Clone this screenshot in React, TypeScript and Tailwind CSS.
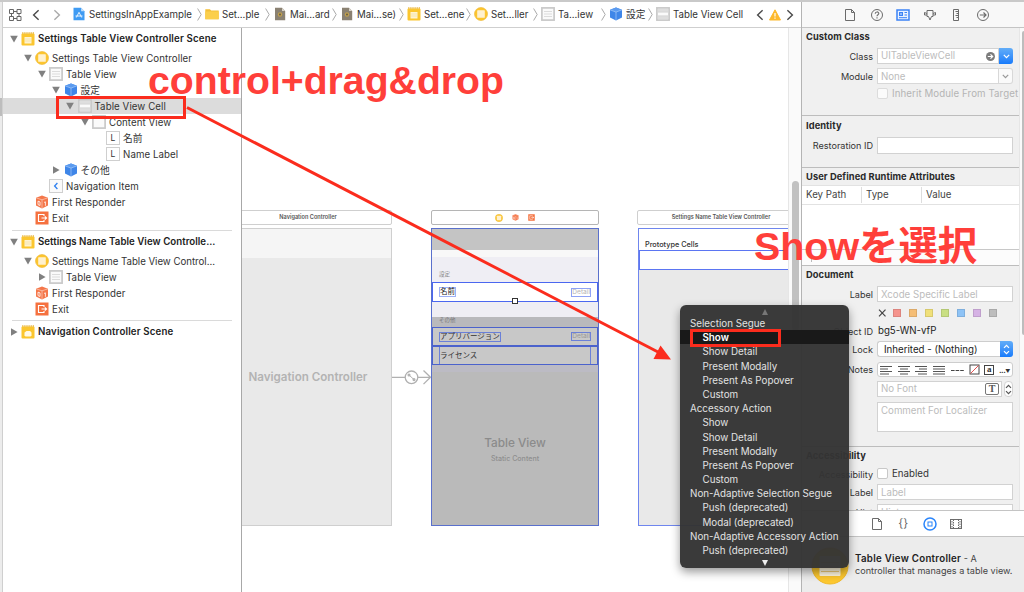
import React from 'react';

type IconName = 'scene' | 'navScene' | 'controller' | 'table' | 'cell' | 'view' | 'cube' | 'label' | 'navItem' | 'responder' | 'exit' | 'app' | 'folder' | 'file';

interface OutlineNode {
  level: number;
  icon: IconName;
  text: string;
  arrow?: 'open' | 'closed';
  selected?: boolean;
}

const INDENT = ['pl-[4px]', 'pl-[18px]', 'pl-[32px]', 'pl-[46.5px]', 'pl-[60.5px]', 'pl-[75px]', 'pl-[89px]'];

const settingsScene: OutlineNode[] = [
  { level: 1, icon: 'controller', text: 'Settings Table View Controller', arrow: 'open' },
  { level: 2, icon: 'table', text: 'Table View', arrow: 'open' },
  { level: 3, icon: 'cube', text: '設定', arrow: 'open' },
  { level: 4, icon: 'cell', text: 'Table View Cell', arrow: 'open', selected: true },
  { level: 5, icon: 'view', text: 'Content View', arrow: 'open' },
  { level: 6, icon: 'label', text: '名前' },
  { level: 6, icon: 'label', text: 'Name Label' },
  { level: 3, icon: 'cube', text: 'その他', arrow: 'closed' },
  { level: 2, icon: 'navItem', text: 'Navigation Item' },
  { level: 1, icon: 'responder', text: 'First Responder' },
  { level: 1, icon: 'exit', text: 'Exit' },
];

const nameScene: OutlineNode[] = [
  { level: 1, icon: 'controller', text: 'Settings Name Table View Control...', arrow: 'open' },
  { level: 2, icon: 'table', text: 'Table View', arrow: 'closed' },
  { level: 1, icon: 'responder', text: 'First Responder' },
  { level: 1, icon: 'exit', text: 'Exit' },
];

const crumbs: { icon: IconName; text: string; width: string }[] = [
  { icon: 'app', text: 'SettingsInAppExample', width: 'w-[133px]' },
  { icon: 'folder', text: 'Set...ple', width: 'w-[68px]' },
  { icon: 'file', text: 'Mai...ard', width: 'w-[67px]' },
  { icon: 'file', text: 'Mai...se)', width: 'w-[67px]' },
  { icon: 'scene', text: 'Set...ene', width: 'w-[67px]' },
  { icon: 'controller', text: 'Set...ller', width: 'w-[67px]' },
  { icon: 'table', text: 'Ta...iew', width: 'w-[68px]' },
  { icon: 'cube', text: '設定', width: 'w-[47px]' },
  { icon: 'cell', text: 'Table View Cell', width: 'w-[96px]' },
];

const segues: { text: string; header?: boolean; active?: boolean }[] = [
  { text: 'Selection Segue', header: true },
  { text: 'Show', active: true },
  { text: 'Show Detail' },
  { text: 'Present Modally' },
  { text: 'Present As Popover' },
  { text: 'Custom' },
  { text: 'Accessory Action', header: true },
  { text: 'Show' },
  { text: 'Show Detail' },
  { text: 'Present Modally' },
  { text: 'Present As Popover' },
  { text: 'Custom' },
  { text: 'Non-Adaptive Selection Segue', header: true },
  { text: 'Push (deprecated)' },
  { text: 'Modal (deprecated)' },
  { text: 'Non-Adaptive Accessory Action', header: true },
  { text: 'Push (deprecated)' },
];

const swatches = ['bg-[#f5948d]', 'bg-[#f5be76]', 'bg-[#f0e07a]', 'bg-[#c9df83]', 'bg-[#8ec3f6]', 'bg-[#d5b2e4]', 'bg-[#bdbdbd]'];

const Icon = ({ name, size = 14 }: { name: IconName; size?: number }) => (
  <svg width={size} height={size} viewBox="0 0 14 14" fill="none" className="shrink-0">
    {(name === 'scene' || name === 'navScene') && (
      <>
        <rect x="0.5" y="1.5" width="13" height="12" rx="1" fill="#fbc62f" />
        <path d="M1.2 1h12" stroke="#e6b030" strokeWidth="1.4" strokeDasharray="1.2 0.9" />
        {name === 'scene' ? (
          <>
            <rect x="3.5" y="5" width="7" height="6.5" fill="#fff3d0" />
            <path d="M4 7h6M4 9h6" stroke="#f1dfa5" strokeWidth="0.7" />
          </>
        ) : (
          <path d="M3.5 7.6L5.5 6h3.6l1.4 1.6v3l-1 0.9h-5l-1-0.9z" fill="#fff9e6" />
        )}
      </>
    )}
    {name === 'controller' && (
      <>
        <circle cx="7" cy="7" r="6.5" fill="#fcc52f" stroke="#edb52d" strokeWidth="0.6" />
        <rect x="3.2" y="3.2" width="7.6" height="7.6" rx="0.6" fill="#fff1cf" />
      </>
    )}
    {(name === 'table' || name === 'cell' || name === 'view') && (
      <>
        <rect x="0.9" y="0.9" width="12.2" height="12.2" fill="#fafafa" stroke="#c9c9c9" strokeWidth="1.7" />
        {name === 'table' && <path d="M3 4.5h8M3 7h8M3 9.5h8" stroke="#d4d4d4" strokeWidth="0.8" />}
        {name === 'cell' && (
          <>
            <path d="M2 3.3h10M2 10.9h10" stroke="#dedede" strokeWidth="2.6" />
            <path d="M2 5h10M2 9h10" stroke="#bcbcbc" strokeWidth="0.7" />
          </>
        )}
      </>
    )}
    {name === 'cube' && (
      <>
        <path d="M7 0.4l6 2.4v7.8l-6 3-6-3V2.8z" fill="#3f86e8" />
        <path d="M7 0.4l6 2.4-6 2.3-6-2.3z" fill="#5b9bf0" />
        <path d="M1 2.8l6 2.3 6-2.3M7 5.1v8.5" stroke="#b9d5fa" strokeWidth="0.6" />
      </>
    )}
    {name === 'navItem' && (
      <>
        <rect x="0.5" y="0.5" width="13" height="13" fill="#fafafa" stroke="#cfcfcf" />
        <path d="M8.4 4L5.6 7l2.8 3" stroke="#2f80f0" strokeWidth="1.3" />
      </>
    )}
    {name === 'responder' && (
      <>
        <path d="M7 0.5l6 2.2v7.8l-6 3-6-3V2.7z" fill="#f5774a" />
        <path d="M1 2.8l6 2 6-2M7 4.8v8.5" stroke="#fbd0bf" strokeWidth="0.7" />
        <path d="M3 6.2l2 .7v3.6l-2-.9zM9 7.5l1.4-.7v4" stroke="#fff" strokeWidth="0.8" />
      </>
    )}
    {name === 'exit' && (
      <>
        <rect x="0.5" y="0.5" width="13" height="13" fill="#f5713f" />
        <path d="M9 5V3.5H3.5v7H9V9M6.5 7h5M9.8 5.3L11.6 7 9.8 8.7" stroke="#fff" strokeWidth="1.1" />
      </>
    )}
    {name === 'app' && (
      <>
        <path d="M1.5 0.8h7.6l3.4 3.4v9H1.5z" fill="#3f9bf3" />
        <path d="M9.1 0.8v3.4h3.4z" fill="#c5e1fb" />
        <path d="M4.3 10.5L7 5.3l2.7 5.2M3.5 9h7" stroke="#e6f3ff" strokeWidth="1" />
      </>
    )}
    {name === 'folder' && (
      <>
        <path d="M0.3 2.2h4.6l1.2 1.4h7.6v8.6H0.3z" fill="#f3bf37" />
        <path d="M0.3 4.4h13.4v7.8H0.3z" fill="#fbcf4c" />
      </>
    )}
    {name === 'file' && (
      <>
        <path d="M2 0.8h7l3.2 3.2v9.2H2z" fill="#8a8172" />
        <path d="M9 0.8V4h3.2z" fill="#d7d2c8" />
        <circle cx="7" cy="7.5" r="2.2" fill="#c2a04c" />
        <circle cx="7" cy="7.5" r="0.9" fill="#5b5547" />
      </>
    )}
  </svg>
);

const Chevron = ({ left, color = '#4a4a4a' }: { left?: boolean; color?: string }) => (
  <svg width="8" height="12" viewBox="0 0 8 12" fill="none" className="shrink-0">
    <path d={left ? 'M6.6 1.2L1.6 6l5 4.8' : 'M1.4 1.2l5 4.8-5 4.8'} stroke={color} strokeWidth="1.4" />
  </svg>
);

const Disclosure = ({ state }: { state?: 'open' | 'closed' }) => (
  <span className="flex w-[13px] shrink-0 justify-center">
    {state && (
      <svg width="8" height="8" viewBox="0 0 8 8">
        <path d={state === 'open' ? 'M0.2 0.8h7.6L4 7.6z' : 'M1 0.2v7.6L7.6 4z'} fill="#808080" />
      </svg>
    )}
  </span>
);

const NodeIcon = ({ name }: { name: IconName }) => (
  <span className="mr-[2px] flex w-4 shrink-0 justify-center">
    {name === 'label' ? (
      <span className="flex size-[14px] items-center justify-center border border-[#cfcfcf] bg-white text-[8.5px]">L</span>
    ) : (
      <Icon name={name} />
    )}
  </span>
);

const OutlineRow = ({ node }: { node: OutlineNode }) => (
  <div className={`flex h-4 items-center whitespace-nowrap ${INDENT[node.level]} ${node.selected ? 'bg-[#dcdcdc]' : ''}`}>
    <Disclosure state={node.arrow} />
    <NodeIcon name={node.icon} />
    <span className={node.text.endsWith('...') ? 'pt-[2px] tracking-[-0.03px]' : 'pt-[2px] tracking-[0.08px]'}>{node.text}</span>
  </div>
);

const SceneHeader = ({ text, icon = 'scene', arrow = 'open' }: { text: string; icon?: IconName; arrow?: 'open' | 'closed' }) => (
  <div className="flex h-[22px] items-center whitespace-nowrap pl-[4px] font-semibold text-[#222]">
    <Disclosure state={arrow} />
    <NodeIcon name={icon} />
    <span className={text.endsWith('...') ? 'pt-px tracking-[0.03px]' : 'pt-px tracking-[0.16px]'}>{text}</span>
  </div>
);

const Outline = () => (
  <div className="w-[239px] shrink-0 overflow-hidden border-r border-[#a8a8a8] bg-white">
    <SceneHeader text="Settings Table View Controller Scene" />
    {settingsScene.map((n, i) => <OutlineRow key={i} node={n} />)}
    <div className="mx-[9px] mt-1 h-px bg-[#dadada]" />
    <SceneHeader text="Settings Name Table View Controlle..." />
    {nameScene.map((n, i) => <OutlineRow key={i} node={n} />)}
    <div className="mx-[9px] mt-[3px] h-px bg-[#dadada]" />
    <SceneHeader text="Navigation Controller Scene" icon="navScene" arrow="closed" />
  </div>
);

const JumpBar = () => (
  <div className="flex h-[26px] shrink-0 items-center border-b border-[#cfcfcf] bg-white pl-[6px] whitespace-nowrap">
    <svg width="13" height="12" viewBox="0 0 13 12" fill="none" stroke="#666" strokeWidth="1">
      <path d="M0.5 0.5h4v4h-4zM8 0.5h4v4H8zM0.5 7.5h4v4h-4zM8 7.5h4v4H8zM4.5 2.5H8M2.5 4.5v3M10 4.5v3M4.5 9.5H8" />
    </svg>
    <div className="flex w-[50px] justify-between pr-[11px] pl-[10px]">
      <Chevron left />
      <Chevron color="#aaa" />
    </div>
    <div className="flex items-center">
      {crumbs.map((c, i) => (
        <div key={i} className={`flex shrink-0 items-center ${c.width}`}>
          <Icon name={c.icon} />
          <span className="ml-[3px] pt-px">{c.text}</span>
          {i < crumbs.length - 1 && (
            <svg width="5" height="13" viewBox="0 0 5 13" fill="none" className="mr-[3.5px] ml-auto">
              <path d="M0.6 0.5L4.2 6.5l-3.6 6" stroke="#aaa" strokeWidth="1" />
            </svg>
          )}
        </div>
      ))}
    </div>
    <div className="flex items-center gap-[5px] pl-[4px]">
      <Chevron left />
      <svg width="12" height="12" viewBox="0 0 12 12">
        <path d="M6 0.8L11.5 11h-11z" fill="#fdb92d" stroke="#fdb92d" strokeWidth="1" strokeLinejoin="round" />
        <path d="M6 4v3.6M6 8.6v1.2" stroke="#fff" strokeWidth="1.2" />
      </svg>
      <Chevron />
    </div>
  </div>
);

// Storyboard canvas: scenes sit at free positions
const Canvas = () => (
  <div className="relative h-full flex-1 overflow-hidden bg-white">
    {/* Navigation Controller */}
    <div className="absolute top-[182px] left-[-18px] flex h-[15px] w-[168px] items-center justify-center rounded-[2px] border border-[#cfcfcf] text-[5.6px] font-semibold text-[#555]">
      Navigation Controller
    </div>
    <div className="absolute top-[200px] left-[-18px] flex h-[298px] w-[168px] flex-col border border-[#cfcfcf] bg-[#e9e9e9]">
      <div className="h-[29px] bg-[#f5f5f5]" />
      <div className="mt-[111px] text-center text-[11.6px] font-semibold text-[#b3b3b3]">Navigation Controller</div>
    </div>
    <svg className="absolute top-[341px] left-[150px]" width="40" height="16" viewBox="0 0 40 16" fill="none" stroke="#b0b0b0" strokeWidth="1.3">
      <path d="M0 8.3h13M26 8.3h12M31.500 1.500L38.500 8.300l-7 6.800" />
      <circle cx="19.5" cy="8.3" r="6.3" />
      <path d="M17 6l5 4.6" strokeWidth="1" />
      <circle cx="17" cy="6" r="0.9" />
      <circle cx="22" cy="10.6" r="0.9" />
    </svg>

    {/* Settings table */}
    <div className="absolute top-[182px] left-[189px] flex h-[15px] w-[168px] items-center justify-center gap-[9px] rounded-[2px] border border-[#b5b5b5] bg-white">
      <Icon name="controller" size={8} />
      <Icon name="responder" size={7} />
      <Icon name="exit" size={7} />
    </div>
    <div className="absolute top-[200px] left-[189px] flex h-[298px] w-[168px] flex-col border border-[#5a70cc] bg-[#bababa] text-[7.5px]">
      <div className="h-[21px] bg-[#c4c4c4]" />
      <div className="h-[7px] bg-[#f8f8f8]" />
      <div className="h-[25px] bg-[#efeef4] pt-[13px] pl-[7px] text-[5.5px] text-[#888]">設定</div>
      <div className="flex h-[20px] items-center justify-between border border-[#4b67f0] bg-white px-[6px]">
        <span className="border border-[#9eb0f5] leading-[8px] text-[#222]">名前</span>
        <span className="border border-[#8ea2f5] text-[6.6px] leading-[7px] text-[#b5b5b5]">Detail</span>
      </div>
      <div className="h-[15px] bg-[#efeef4]" />
      <div className="h-[10px] bg-[#b9b9bc] pl-[7px] text-[5.5px] leading-[7px] text-[#777]">その他</div>
      <div className="flex h-[19px] items-center justify-between border border-[#4b62cc] bg-[#c8c8c8] px-[6px]">
        <span className="border border-[#6a80d8] leading-[8px] text-[#333]">アプリバージョン</span>
        <span className="border border-[#6a80d8] text-[6.6px] leading-[7px] text-[#999]">Detail</span>
      </div>
      <div className="flex h-[19px] border border-[#4b62cc] bg-[#c8c8c8] px-[6px]">
        <span className="w-full border-x border-[#6a80d8] leading-[17px] text-[#333]">ライセンス</span>
      </div>
      <div className="h-[7px] bg-[#bcbbc4]" />
      <div className="mt-[62px] text-center text-[11.8px] leading-[18px] font-medium text-[#8b8b8b]">Table View</div>
      <div className="text-center text-[7.1px] leading-[13px] font-medium text-[#8f8f8f]">Static Content</div>
    </div>
    <div className="absolute top-[270px] left-[270px] size-[6px] border border-[#333] bg-white" />

    {/* Settings name table */}
    <div className="absolute top-[182px] left-[395px] flex h-[15px] w-[168px] items-center justify-center rounded-[2px] border border-[#cfcfcf] text-[5.6px] font-semibold text-[#555]">
      Settings Name Table View Controller
    </div>
    <div className="absolute top-[200px] left-[396px] flex h-[298px] w-[168px] flex-col border border-[#6f86ee] bg-[#e9e9e9]">
      <div className="h-[21px] bg-white pt-[9px] pl-[6px] text-[7.3px] leading-[13px] font-medium text-[#333]">Prototype Cells</div>
      <div className="h-[20px] border border-[#5b75f2] bg-white" />
    </div>
  </div>
);

const FieldRow = ({ label, className = 'h-[19px]', children }: { label?: string; className?: string; children: React.ReactNode }) => (
  <div className={`flex items-center ${className}`}>
    <span className="w-[71px] shrink-0 pt-px text-right text-[9.1px] whitespace-nowrap text-[#333]">{label}</span>
    <div className="ml-1 flex w-[136px] shrink-0 items-center">{children}</div>
  </div>
);

const TextField = ({ placeholder, className = 'h-4' }: { placeholder?: string; className?: string }) => (
  <div className={`flex w-full border border-[#d2d2d2] bg-white px-[3px] leading-[15px] whitespace-nowrap text-[#bcbcbc] ${className}`}>{placeholder}</div>
);

const SectionTitle = ({ children }: { children: React.ReactNode }) => (
  <div className="pl-1 text-[9.3px] leading-[17px] font-bold tracking-[0.08px] whitespace-nowrap text-[#2a2a2a]">{children}</div>
);

const SmallChevron = ({ color }: { color: string }) => (
  <svg width="7" height="5" viewBox="0 0 7 5" fill="none">
    <path d="M0.8 0.8L3.5 3.7 6.2 0.8" stroke={color} strokeWidth="1.2" />
  </svg>
);

const UpDown = ({ color }: { color: string }) => (
  <svg width="7" height="11" viewBox="0 0 7 11" fill="none" stroke={color} strokeWidth="1.2">
    <path d="M1 3.8L3.5 1.3 6 3.8M1 7.2l2.5 2.5L6 7.2" />
  </svg>
);

const InspectorTabs = () => (
  <div className="flex h-[26px] shrink-0 items-center justify-center gap-[12.6px] border-b border-[#c4c4c4] bg-[#f8f8f8] pl-[7px]">
    <svg width="14" height="14" viewBox="0 0 14 14" fill="none" stroke="#6b6b6b">
      <path d="M2.5 1.5h6l3 3v8h-9zM8.5 1.5v3h3" />
    </svg>
    <svg width="14" height="14" viewBox="0 0 14 14" fill="none" stroke="#6b6b6b">
      <circle cx="7" cy="7" r="5.5" />
      <path d="M5.2 5.8C5.2 3.3 8.8 3.4 8.8 5.5 8.8 6.8 7 6.7 7 8.3M7 9.2v1.2" strokeWidth="1.1" />
    </svg>
    <svg width="14" height="14" viewBox="0 0 14 14" fill="none" stroke="#3b82f6">
      <rect x="1" y="2" width="12" height="10" fill="#eaf2ff" strokeWidth="1.5" />
      <rect x="3.5" y="4.5" width="3" height="3" fill="#8fb9fa" />
      <path d="M8.5 4.500h2.500M8.500 7h2.500M3 9.700h8" />
    </svg>
    <svg width="14" height="14" viewBox="0 0 14 14" fill="none" stroke="#6b6b6b">
      <path d="M4 2.5h6v6H8.5L7 12 5.5 8.500H4zM1.500 4.500L4 5.500M1.500 4.500v2.500H4M12.500 4.500L10 5.500M12.500 4.500v2.500H10" />
    </svg>
    <svg width="14" height="14" viewBox="0 0 14 14" fill="none" stroke="#6b6b6b">
      <path d="M4.5 1.500h5v11h-5zM6.500 3.500h3M7.500 5.500h2M6.500 7.500h3M7.500 9.500h2" />
    </svg>
    <svg width="14" height="14" viewBox="0 0 14 14" fill="none" stroke="#6b6b6b">
      <circle cx="7" cy="7" r="5.5" />
      <path d="M3.8 7h6M7.500 4.500L10 7 7.500 9.500" strokeWidth="1.2" />
    </svg>
  </div>
);

const NotesBar = () => (
  <div className="flex h-[15px] w-full items-center justify-between rounded-[3px] border border-[#cdcdcd] bg-white px-[2px]">
    {['M0 1.5h12M0 4h8M0 6.5h12M0 9h9', 'M0 1.5h12M2 4h8M0 6.5h12M2 9h8', 'M0 1.5h12M4 4h8M0 6.5h12M3 9h9', 'M0 1.5h12M0 4h12M0 6.5h12M0 9h12'].map(d => (
      <svg key={d} width="13" height="10" viewBox="0 0 13 10" stroke="#555" strokeWidth="1"><path d={d} /></svg>
    ))}
    <svg width="13" height="10" viewBox="0 0 13 10"><path d="M0 5.5h13" stroke="#444" strokeDasharray="3.6 1" /></svg>
    <svg width="11" height="11" viewBox="0 0 11 11" fill="none">
      <rect x="1" y="1" width="9" height="9" stroke="#444" />
      <path d="M1.5 9.5l8-8" stroke="#e25050" />
    </svg>
    <span className="flex size-[10px] items-center justify-center border border-[#444] font-['Liberation_Serif'] text-[9px] leading-none font-bold text-[#333]">a</span>
    <span className="text-[9px] tracking-tighter whitespace-nowrap">...<span className="text-[5px]">▼</span></span>
  </div>
);

const Inspector = () => (
  <div className="flex w-[223px] shrink-0 flex-col border-l border-[#b4b4b4] bg-[#f0f0f0]">
    <InspectorTabs />
    <div className="flex h-[482px] shrink-0 overflow-hidden">
      <div className="w-[217px] shrink-0">
        <section className="h-[87px]">
          <SectionTitle>Custom Class</SectionTitle>
          <FieldRow label="Class" className="mt-[2px] h-[18px]">
            <div className="flex h-4 flex-1 items-center justify-between border border-[#d2d2d2] bg-white px-[3px] text-[#bcbcbc]">
              <span className="pt-px">UITableViewCell</span>
              <svg width="9" height="9" viewBox="0 0 9 9" fill="none">
                <circle cx="4.5" cy="4.5" r="4.5" fill="#7c7c7c" />
                <path d="M1.8 4.5h4.5M4.5 2.3l2.2 2.2-2.2 2.2" stroke="#fff" strokeWidth="1.2" />
              </svg>
            </div>
            <span className="flex h-4 w-[14px] items-center justify-center rounded-r-[3px] bg-gradient-to-b from-[#62adf8] to-[#167bfb]"><SmallChevron color="#fff" /></span>
          </FieldRow>
          <FieldRow label="Module" className="mt-[2px] h-[18px]">
            <div className="h-4 flex-1 border border-[#d8d8d8] bg-white px-[3px] leading-[15px] text-[#bcbcbc]">None</div>
            <span className="flex h-4 w-[14px] items-center justify-center rounded-r-[3px] border border-l-0 border-[#d8d8d8] bg-[#fafafa]"><SmallChevron color="#999" /></span>
          </FieldRow>
          <FieldRow className="h-[18px]">
            <span className="size-[11px] shrink-0 rounded-[2px] border border-[#dcdcdc] bg-[#fbfbfb]" />
            <span className="ml-[4px] pt-px tracking-[0.09px] whitespace-nowrap text-[#b4b4b4]">Inherit Module From Target</span>
          </FieldRow>
        </section>
        <section className="h-[52px] border-t border-[#bdbdbd] pt-[1px]">
          <SectionTitle>Identity</SectionTitle>
          <FieldRow label="Restoration ID" className="mt-[2px] h-[18px]"><TextField className="h-[17px]" /></FieldRow>
        </section>
        <section className="flex h-[98px] flex-col border-t border-[#bdbdbd]">
          <SectionTitle>User Defined Runtime Attributes</SectionTitle>
          <div className="flex h-[20px] shrink-0 items-center border-y border-[#e2e2e2] bg-white text-[#444]">
            <span className="w-[60px] border-r border-[#ddd] pt-px pl-[4px]">Key Path</span>
            <span className="w-[60px] border-r border-[#ddd] pt-px pl-[4px]">Type</span>
            <span className="flex-1 pt-px pl-[4px]">Value</span>
          </div>
          <div className="h-[44px] bg-white" />
          <div className="flex-1 border-t border-[#c8c8c8] bg-[#fcfcfc] pt-[7px] pl-[9px]">
            <div className="h-[5px] w-px bg-[#bbb]" />
          </div>
        </section>
        <section className="h-[181px] border-t border-[#bdbdbd]">
          <SectionTitle>Document</SectionTitle>
          <FieldRow label="Label" className="mt-[2px] h-[18px]"><TextField placeholder="Xcode Specific Label" /></FieldRow>
          <FieldRow className="mt-[1px] h-[18px]">
            <svg width="11" height="8" viewBox="0 0 11 8"><path d="M2 0.7l6.500 6.600M8.500 0.700L2 7.300" stroke="#444" strokeWidth="1.2" /></svg>
            <div className="ml-[5px] flex gap-[8px]">
              {swatches.map(s => <span key={s} className={`size-2 border border-black/10 ${s}`} />)}
            </div>
          </FieldRow>
          <FieldRow label="Object ID" className="h-[18px]"><span className="ml-[1px] pt-px text-[#222]">bg5-WN-vfP</span></FieldRow>
          <FieldRow label="Lock" className="h-[18px]">
            <div className="h-4 flex-1 rounded-l-[3px] border border-r-0 border-[#cdcdcd] bg-white pl-[6px] leading-[15px] whitespace-nowrap text-[#222]">Inherited - (Nothing)</div>
            <span className="flex h-4 w-[13px] items-center justify-center rounded-r-[3px] bg-gradient-to-b from-[#62adf8] to-[#167bfb]"><UpDown color="#fff" /></span>
          </FieldRow>
          <FieldRow label="Notes" className="mt-[2px] h-[19px]"><NotesBar /></FieldRow>
          <FieldRow className="mt-[1px] h-[18px]">
            <div className="flex h-4 w-[125px] items-center justify-between border border-[#d2d2d2] bg-white pl-[3px] text-[#bcbcbc]">
              <span className="pt-px">No Font</span>
              <span className="mr-[2px] flex h-[12px] w-[14px] items-center justify-center rounded-[2px] border-[1.5px] border-[#777] font-['Liberation_Serif'] text-[10px] leading-none font-bold text-[#555]">T</span>
            </div>
            <span className="ml-[2px] flex h-4 w-[9px] items-center justify-center rounded-[4px] border border-[#d2d2d2] bg-white"><UpDown color="#555" /></span>
          </FieldRow>
          <FieldRow className="mt-[3px] h-[31px]"><TextField placeholder="Comment For Localizer" className="h-[30px]" /></FieldRow>
        </section>
        <section className="border-t border-[#bdbdbd]">
          <SectionTitle>Accessibility</SectionTitle>
          <FieldRow label="Accessibility" className="mt-px h-[18px]">
            <span className="size-[11px] rounded-[2px] border border-[#c8c8c8] bg-white" />
            <span className="ml-[4px] text-[#333]">Enabled</span>
          </FieldRow>
          <FieldRow label="Label" className="h-[18px]"><TextField placeholder="Label" /></FieldRow>
          <FieldRow label="Hint" className="mt-[2px] h-[18px]"><TextField placeholder="Hint" /></FieldRow>
        </section>
      </div>
      <div className="flex flex-1 justify-end border-l border-[#e6e6e6] bg-[#fafafa] pt-[3px]">
        <div className="h-[304px] w-[2px] rounded-l bg-[#bdbdbd]" />
      </div>
    </div>
    <div className="flex h-[27px] shrink-0 items-center justify-center gap-[12.6px] border-y border-[#c4c4c4] bg-white pl-[7px]">
      <svg width="14" height="14" viewBox="0 0 14 14" fill="none" stroke="#6b6b6b">
        <path d="M2.5 1.5h6l3 3v8h-9zM8.5 1.5v3h3" />
      </svg>
      <span className="w-[14px] text-center text-[11.5px] leading-none whitespace-nowrap text-[#666]">{'{}'}</span>
      <svg width="14" height="14" viewBox="0 0 14 14" fill="none" stroke="#2a85fb">
        <circle cx="7" cy="7" r="6" strokeWidth="1.5" />
        <rect x="5" y="5" width="4" height="4" />
      </svg>
      <svg width="14" height="14" viewBox="0 0 14 14" fill="none" stroke="#6b6b6b">
        <rect x="1.5" y="2.5" width="11" height="9" />
        <path d="M4.5 2.5v9M9.5 2.5v9M3 4v7M11 4v7" strokeDasharray="1.5 1" />
      </svg>
    </div>
    <div className="flex flex-1 bg-[#ececec] pt-[10px] pl-[9px]">
      <svg width="38" height="38" viewBox="0 0 38 38" className="shrink-0">
        <circle cx="19" cy="19" r="18" fill="#fdc82f" stroke="#f0b92a" />
        <rect x="8.5" y="9" width="21" height="20" rx="1" fill="#fff7e0" />
        <path d="M10 15.5h18M10 20h18M10 24.5h18" stroke="#eccb7a" strokeWidth="1.2" />
      </svg>
      <div className="ml-[6px] pt-[6px] text-[9.1px] leading-[12px] whitespace-nowrap text-[#444]">
        <div><span className="text-[9.7px] font-semibold tracking-[0.28px] text-[#222]">Table View Controller</span> - A</div>
        <div>controller that manages a table view.</div>
      </div>
    </div>
  </div>
);

const SeguePopup = () => (
  <div className="absolute top-[305px] left-[680px] h-[263px] w-[169px] rounded-[6px] bg-[#343434]/97 pt-[2px] text-[9.8px] whitespace-nowrap text-[#e2e2e2] shadow-[0_4px_10px_rgba(0,0,0,0.4)]">
    <div className="flex h-[9px] items-center justify-center">
      <svg width="6" height="6" viewBox="0 0 6 6"><path d="M0 6h6L3 0z" fill="#777" /></svg>
    </div>
    {segues.map((s, i) => (
      <div
        key={i}
        className={`h-[14.2px] leading-[15.6px] ${s.header ? 'pl-[10px]' : 'pl-[22.5px]'} ${s.active ? 'bg-[#191919] font-semibold text-white' : ''}`}
      >
        {s.text}
      </div>
    ))}
    <div className="flex h-[11px] items-center justify-center">
      <svg width="6" height="6" viewBox="0 0 6 6"><path d="M0 0h6L3 6z" fill="#eee" /></svg>
    </div>
  </div>
);

// Red annotations drawn over the window
const Annotations = () => (
  <>
    <div className="absolute top-[96px] left-[56px] h-[23px] w-[130px] border-[3px] border-[#fb2c1d]" />
    <svg className="absolute top-0 left-0" width="1024" height="592" viewBox="0 0 1024 592">
      <path d="M187 107.5L658 352" stroke="#fb2c1d" strokeWidth="3" />
      <path d="M671 359.5l-17.5-0.5 7-13.5z" fill="#fb2c1d" />
    </svg>
    <div className="absolute top-[59px] left-[148px] font-['Liberation_Sans'] text-[39.2px] leading-[44px] font-bold whitespace-nowrap text-[#ff3f3a]">control+drag&amp;drop</div>
    <div className="absolute top-[223px] left-[754px] font-['Liberation_Sans','Noto_Sans_CJK_JP',sans-serif] text-[39.4px] leading-[46px] font-bold whitespace-nowrap text-[#ff3f3a]">Showを選択</div>
    <div className="absolute top-[329px] left-[690px] h-[18px] w-[91px] border-[3px] border-[#fb2c1d]" />
  </>
);

export default function App() {
  return (
    <div className="relative flex h-[592px] w-[1024px] flex-col overflow-hidden bg-white font-['Inter','Noto_Sans_CJK_JP',sans-serif] text-[9.7px] text-[#333]">
      <div className="h-[2px] shrink-0 bg-[#c9c9c9]" />
      <div className="flex h-[590px]">
        <div className="w-[3px] shrink-0 border-r border-[#cfcfcf] bg-[#ececec] pt-24">
          <div className="h-[18px] bg-[#bdbdbd]" />
        </div>
        <div className="flex w-[798px] shrink-0 flex-col">
          <JumpBar />
          <div className="flex h-[564px]">
            <Outline />
            <Canvas />
            <div className="w-[13px] shrink-0 border-l border-[#e6e6e6] bg-[#fafafa] pt-[153px] pl-[3px]">
              <div className="h-[150px] w-[7px] rounded-full bg-[#c1c1c1]" />
            </div>
          </div>
        </div>
        <Inspector />
      </div>
      <SeguePopup />
      <Annotations />
    </div>
  );
}
